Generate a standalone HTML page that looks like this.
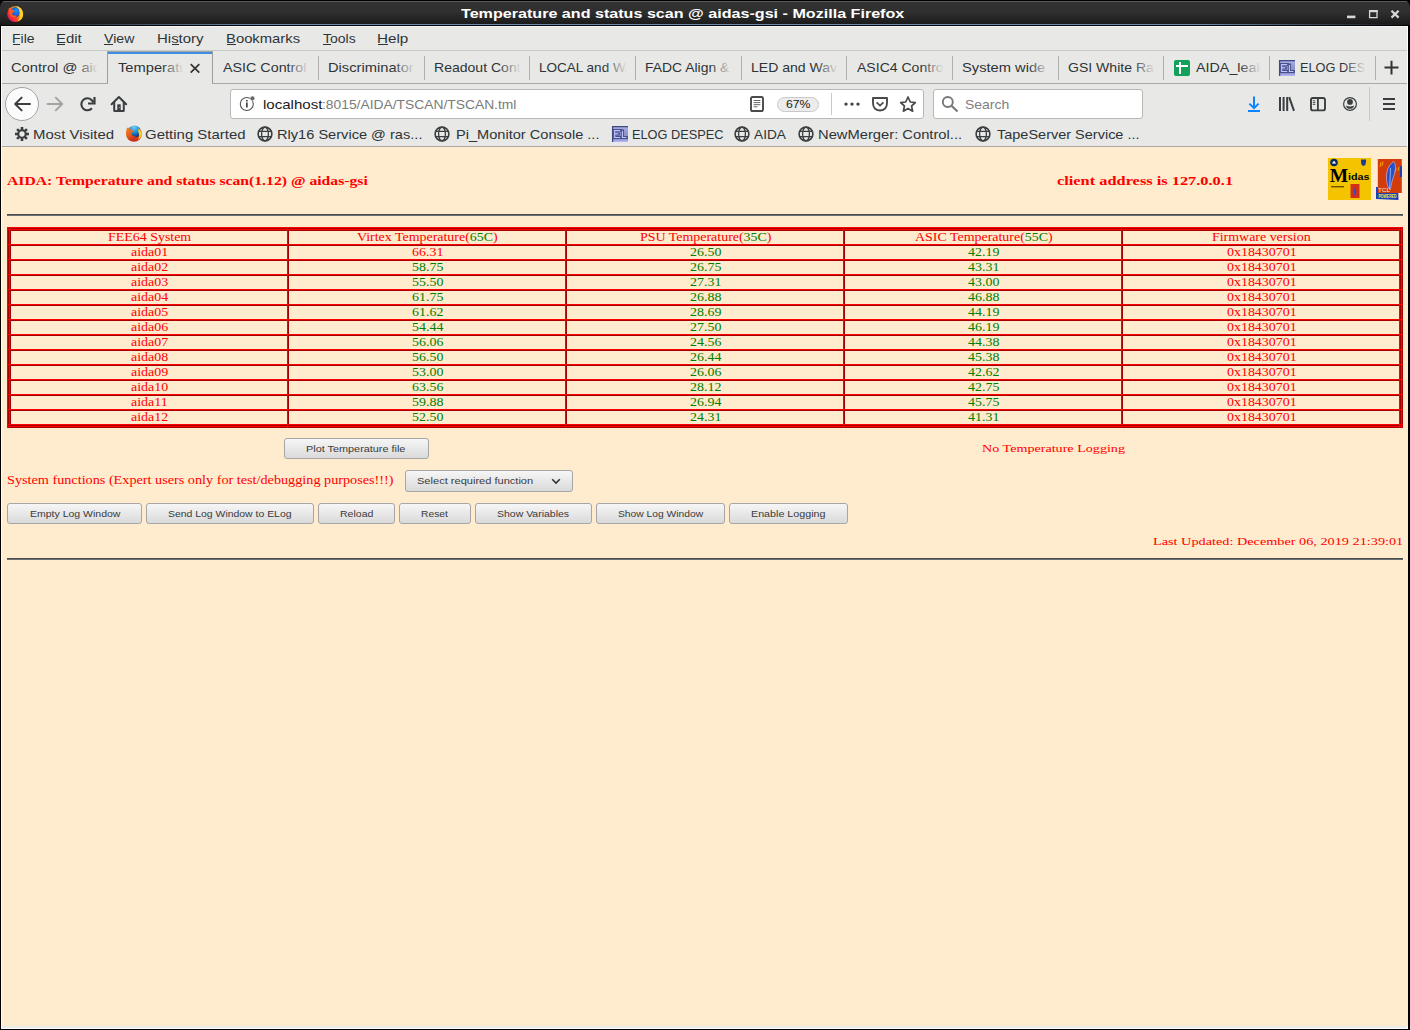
<!DOCTYPE html>
<html><head><meta charset="utf-8">
<style>
*{margin:0;padding:0;box-sizing:border-box}
html,body{width:1410px;height:1030px;overflow:hidden;background:#000}
body{position:relative;font-family:"Liberation Sans",sans-serif}
.a{position:absolute}
.t{position:absolute;white-space:nowrap;transform-origin:0 0;line-height:1}
.btn{position:absolute;border:1px solid #a6a6a6;border-radius:3px;background:linear-gradient(#f6f6f6,#dadada)}
svg{position:absolute;overflow:visible}
</style></head><body>

<div class="a" style="left:0;top:0;width:1410px;height:26px;background:linear-gradient(#000 0,#000 1px,#585858 1px,#585858 2px,#323232 2px,#2f2f2f 12px,#1d1d1d 23px,#1a1a1a 24px);border-radius:7px 7px 0 0"></div>
<div class="a" style="left:2px;top:24px;width:1406px;height:1px;background:linear-gradient(to right,rgba(106,138,176,0) 10px,#6a8ab0 260px,#6a8ab0 1200px,rgba(106,138,176,0) 1400px)"></div>
<div class="a" style="left:0;top:25px;width:1410px;height:1px;background:#050505"></div>
<div class="a" style="left:1px;top:26px;width:1407px;height:1003px;background:#fdfdfd"></div>
<div class="a" style="left:2px;top:26px;width:1405px;height:121px;background:#e8e8e7"></div>
<div class="a" style="left:2px;top:26px;width:1405px;height:1px;background:#f6f6f5"></div>
<div class="a" style="left:2px;top:50px;width:1405px;height:1px;background:#c9c9c7"></div>
<div class="a" style="left:2px;top:83px;width:1405px;height:1px;background:#a9a9a7"></div>
<div class="a" style="left:2px;top:146px;width:1405px;height:1px;background:#a9a9a7"></div>
<div class="a" style="left:2px;top:147px;width:1406px;height:879px;background:#ffebcd"></div>
<div class="a" style="left:2px;top:1026px;width:1405px;height:2px;background:#ececec"></div>
<div class="a" style="left:7px;top:214px;width:1396px;height:1px;background:#4b4d50"></div>
<div class="a" style="left:7px;top:215px;width:1396px;height:1px;background:#6c6f72"></div>
<div class="a" style="left:7px;top:558px;width:1396px;height:1px;background:#4b4d50"></div>
<div class="a" style="left:7px;top:559px;width:1396px;height:1px;background:#6c6f72"></div>
<svg style="left:7px;top:227px" width="1396" height="201" shape-rendering="crispEdges"><rect x="0" y="0" width="1396" height="201" fill="#a80000"/><rect x="0" y="0" width="1396" height="1" fill="#ff0000"/><rect x="0" y="2" width="1396" height="1" fill="#ff0000"/><rect x="0" y="17" width="1396" height="1" fill="#ff0000"/><rect x="0" y="32" width="1396" height="1" fill="#ff0000"/><rect x="0" y="47" width="1396" height="1" fill="#ff0000"/><rect x="0" y="62" width="1396" height="1" fill="#ff0000"/><rect x="0" y="77" width="1396" height="1" fill="#ff0000"/><rect x="0" y="92" width="1396" height="1" fill="#ff0000"/><rect x="0" y="107" width="1396" height="1" fill="#ff0000"/><rect x="0" y="122" width="1396" height="1" fill="#ff0000"/><rect x="0" y="137" width="1396" height="1" fill="#ff0000"/><rect x="0" y="152" width="1396" height="1" fill="#ff0000"/><rect x="0" y="167" width="1396" height="1" fill="#ff0000"/><rect x="0" y="182" width="1396" height="1" fill="#ff0000"/><rect x="0" y="197" width="1396" height="1" fill="#ff0000"/><rect x="0" y="199" width="1396" height="1" fill="#ff0000"/><rect x="0" y="0" width="1" height="201" fill="#ff0000"/><rect x="2" y="0" width="1" height="201" fill="#ff0000"/><rect x="280" y="0" width="1" height="201" fill="#ff0000"/><rect x="558" y="0" width="1" height="201" fill="#ff0000"/><rect x="836" y="0" width="1" height="201" fill="#ff0000"/><rect x="1114" y="0" width="1" height="201" fill="#ff0000"/><rect x="1392" y="0" width="1" height="201" fill="#ff0000"/><rect x="1394" y="0" width="1" height="201" fill="#ff0000"/><rect x="4" y="4" width="276" height="13" fill="#ffebcd"/><rect x="4" y="19" width="276" height="13" fill="#ffebcd"/><rect x="4" y="34" width="276" height="13" fill="#ffebcd"/><rect x="4" y="49" width="276" height="13" fill="#ffebcd"/><rect x="4" y="64" width="276" height="13" fill="#ffebcd"/><rect x="4" y="79" width="276" height="13" fill="#ffebcd"/><rect x="4" y="94" width="276" height="13" fill="#ffebcd"/><rect x="4" y="109" width="276" height="13" fill="#ffebcd"/><rect x="4" y="124" width="276" height="13" fill="#ffebcd"/><rect x="4" y="139" width="276" height="13" fill="#ffebcd"/><rect x="4" y="154" width="276" height="13" fill="#ffebcd"/><rect x="4" y="169" width="276" height="13" fill="#ffebcd"/><rect x="4" y="184" width="276" height="13" fill="#ffebcd"/><rect x="282" y="4" width="276" height="13" fill="#ffebcd"/><rect x="282" y="19" width="276" height="13" fill="#ffebcd"/><rect x="282" y="34" width="276" height="13" fill="#ffebcd"/><rect x="282" y="49" width="276" height="13" fill="#ffebcd"/><rect x="282" y="64" width="276" height="13" fill="#ffebcd"/><rect x="282" y="79" width="276" height="13" fill="#ffebcd"/><rect x="282" y="94" width="276" height="13" fill="#ffebcd"/><rect x="282" y="109" width="276" height="13" fill="#ffebcd"/><rect x="282" y="124" width="276" height="13" fill="#ffebcd"/><rect x="282" y="139" width="276" height="13" fill="#ffebcd"/><rect x="282" y="154" width="276" height="13" fill="#ffebcd"/><rect x="282" y="169" width="276" height="13" fill="#ffebcd"/><rect x="282" y="184" width="276" height="13" fill="#ffebcd"/><rect x="560" y="4" width="276" height="13" fill="#ffebcd"/><rect x="560" y="19" width="276" height="13" fill="#ffebcd"/><rect x="560" y="34" width="276" height="13" fill="#ffebcd"/><rect x="560" y="49" width="276" height="13" fill="#ffebcd"/><rect x="560" y="64" width="276" height="13" fill="#ffebcd"/><rect x="560" y="79" width="276" height="13" fill="#ffebcd"/><rect x="560" y="94" width="276" height="13" fill="#ffebcd"/><rect x="560" y="109" width="276" height="13" fill="#ffebcd"/><rect x="560" y="124" width="276" height="13" fill="#ffebcd"/><rect x="560" y="139" width="276" height="13" fill="#ffebcd"/><rect x="560" y="154" width="276" height="13" fill="#ffebcd"/><rect x="560" y="169" width="276" height="13" fill="#ffebcd"/><rect x="560" y="184" width="276" height="13" fill="#ffebcd"/><rect x="838" y="4" width="276" height="13" fill="#ffebcd"/><rect x="838" y="19" width="276" height="13" fill="#ffebcd"/><rect x="838" y="34" width="276" height="13" fill="#ffebcd"/><rect x="838" y="49" width="276" height="13" fill="#ffebcd"/><rect x="838" y="64" width="276" height="13" fill="#ffebcd"/><rect x="838" y="79" width="276" height="13" fill="#ffebcd"/><rect x="838" y="94" width="276" height="13" fill="#ffebcd"/><rect x="838" y="109" width="276" height="13" fill="#ffebcd"/><rect x="838" y="124" width="276" height="13" fill="#ffebcd"/><rect x="838" y="139" width="276" height="13" fill="#ffebcd"/><rect x="838" y="154" width="276" height="13" fill="#ffebcd"/><rect x="838" y="169" width="276" height="13" fill="#ffebcd"/><rect x="838" y="184" width="276" height="13" fill="#ffebcd"/><rect x="1116" y="4" width="276" height="13" fill="#ffebcd"/><rect x="1116" y="19" width="276" height="13" fill="#ffebcd"/><rect x="1116" y="34" width="276" height="13" fill="#ffebcd"/><rect x="1116" y="49" width="276" height="13" fill="#ffebcd"/><rect x="1116" y="64" width="276" height="13" fill="#ffebcd"/><rect x="1116" y="79" width="276" height="13" fill="#ffebcd"/><rect x="1116" y="94" width="276" height="13" fill="#ffebcd"/><rect x="1116" y="109" width="276" height="13" fill="#ffebcd"/><rect x="1116" y="124" width="276" height="13" fill="#ffebcd"/><rect x="1116" y="139" width="276" height="13" fill="#ffebcd"/><rect x="1116" y="154" width="276" height="13" fill="#ffebcd"/><rect x="1116" y="169" width="276" height="13" fill="#ffebcd"/><rect x="1116" y="184" width="276" height="13" fill="#ffebcd"/></svg>
<div class="btn" style="left:284px;top:438px;width:145px;height:21px"></div>
<div class="btn" style="left:405px;top:470px;width:168px;height:22px"></div>
<div class="btn" style="left:7px;top:503px;width:135px;height:21px"></div>
<div class="btn" style="left:146px;top:503px;width:168px;height:21px"></div>
<div class="btn" style="left:318px;top:503px;width:77px;height:21px"></div>
<div class="btn" style="left:399px;top:503px;width:72px;height:21px"></div>
<div class="btn" style="left:475px;top:503px;width:117px;height:21px"></div>
<div class="btn" style="left:596px;top:503px;width:129px;height:21px"></div>
<div class="btn" style="left:729px;top:503px;width:119px;height:21px"></div>
<svg style="left:551px;top:478px" width="10" height="7"><path d="M1.2 1.2 L5 5 L8.8 1.2" fill="none" stroke="#333" stroke-width="1.6"/></svg>
<svg style="left:7px;top:6px" width="18" height="18" viewBox="7 6 18 18" ><defs><linearGradient id="ffa" x1="0" y1="0.9" x2="1" y2="0.1"><stop offset="0" stop-color="#c8107f"/><stop offset=".3" stop-color="#ff2d3a"/><stop offset=".62" stop-color="#ff8a00"/><stop offset=".85" stop-color="#ffd42a"/></linearGradient><radialGradient id="ffb" cx=".6" cy=".35" r=".7"><stop offset="0" stop-color="#0a9cff"/><stop offset=".7" stop-color="#1f4fd6"/><stop offset="1" stop-color="#2a2a8f"/></radialGradient></defs><circle cx="15.2" cy="14.2" r="7.9" fill="url(#ffa)"/><ellipse cx="15.3" cy="12.3" rx="4.4" ry="5.4" fill="url(#ffb)"/><path d="M16.3 5.8 Q22.6 7.8 23.1 14 Q23 19.6 17.6 21.6 Q20.6 17.6 19.8 12.6 Q19 8.2 16.3 5.8Z" fill="#ffcf2a"/><path d="M8.6 8.6 L10.4 7.6 L11.6 9.6 Q13.6 9.8 14.8 11.6 L13.2 12.2 Q11.9 13 12.4 14.8 Q13.8 16 16.2 15.2 Q17.4 16.8 14.8 17.8 Q10.6 17.8 9.4 14Z" fill="#ff5a1a"/></svg>
<svg style="left:1344px;top:8px" width="60" height="14" viewBox="1344 8 60 14" ><rect x="1347" y="15.6" width="8.4" height="2.6" fill="#d8d8d8"/><path d="M1369.6 10.6 H1377 V17.6 H1369.6Z" fill="none" stroke="#d8d8d8" stroke-width="1.3"/><rect x="1369" y="10" width="8.6" height="2.2" fill="#d8d8d8"/><path d="M1391.5 10.8 L1398.6 17.6 M1398.6 10.8 L1391.5 17.6" stroke="#d8d8d8" stroke-width="2.2"/></svg>
<div class="a" style="left:13px;top:44px;width:7px;height:1px;background:#2e3436"></div>
<div class="a" style="left:57px;top:44px;width:8px;height:1px;background:#2e3436"></div>
<div class="a" style="left:104px;top:44px;width:9px;height:1px;background:#2e3436"></div>
<div class="a" style="left:172px;top:44px;width:7px;height:1px;background:#2e3436"></div>
<div class="a" style="left:227px;top:44px;width:9px;height:1px;background:#2e3436"></div>
<div class="a" style="left:323px;top:44px;width:8px;height:1px;background:#2e3436"></div>
<div class="a" style="left:378px;top:44px;width:10px;height:1px;background:#2e3436"></div>
<div class="a" style="left:318px;top:56px;width:1px;height:24px;background:#b0b0ae"></div>
<div class="a" style="left:424px;top:56px;width:1px;height:24px;background:#b0b0ae"></div>
<div class="a" style="left:529px;top:56px;width:1px;height:24px;background:#b0b0ae"></div>
<div class="a" style="left:635px;top:56px;width:1px;height:24px;background:#b0b0ae"></div>
<div class="a" style="left:741px;top:56px;width:1px;height:24px;background:#b0b0ae"></div>
<div class="a" style="left:846px;top:56px;width:1px;height:24px;background:#b0b0ae"></div>
<div class="a" style="left:952px;top:56px;width:1px;height:24px;background:#b0b0ae"></div>
<div class="a" style="left:1058px;top:56px;width:1px;height:24px;background:#b0b0ae"></div>
<div class="a" style="left:1163px;top:56px;width:1px;height:24px;background:#b0b0ae"></div>
<div class="a" style="left:1269px;top:56px;width:1px;height:24px;background:#b0b0ae"></div>
<div class="a" style="left:1375px;top:56px;width:1px;height:24px;background:#b0b0ae"></div>
<div class="a" style="left:107px;top:51px;width:106px;height:33px;background:#e8e8e7;border-left:1px solid #9d9d9b;border-right:1px solid #9d9d9b;border-top:1px solid #a6a6a4"></div>
<div class="a" style="left:108px;top:52px;width:104px;height:2px;background:#3b8ee0"></div>
<svg style="left:188px;top:62px" width="13" height="13" viewBox="188 62 13 13" ><path d="M190.7 64.2 L199.3 72.6 M199.3 64.2 L190.7 72.6" stroke="#333" stroke-width="1.7"/></svg>
<svg style="left:1174px;top:60px" width="16" height="16" viewBox="1174 60 16 16" ><rect x="1174" y="60" width="16" height="16" rx="2" fill="#12a05a"/><rect x="1176" y="65" width="12" height="2" fill="#fff"/><rect x="1179" y="62" width="2" height="12" fill="#fff"/></svg>
<svg style="left:1279px;top:60px" width="16" height="16" viewBox="1279 60 16 16" ><defs><linearGradient id="eg1279" x1="0" y1="0" x2="0" y2="1"><stop offset="0" stop-color="#aeb0ec"/><stop offset=".45" stop-color="#9096c8"/><stop offset=".8" stop-color="#8a90c4"/><stop offset="1" stop-color="#b8baff"/></linearGradient></defs><rect x="1279" y="60" width="16" height="16" fill="url(#eg1279)"/><path d="M1279.6 76 V60.6 H1295" stroke="#3f4a80" stroke-width="1.3" fill="none"/><path d="M1287.2 64.6 H1281.7 V71.5 H1287.2 M1281.7 67.9 H1285.3 M1289.4 65 V71.5 H1293.4" stroke="#45508a" stroke-width="3" fill="none" stroke-linecap="square"/><path d="M1287.2 64.6 H1281.7 V71.5 H1287.2 M1281.7 67.9 H1285.3 M1289.4 65 V71.5 H1293.4" stroke="#c4c4ff" stroke-width="1.15" fill="none"/></svg>
<svg style="left:1383px;top:60px" width="17" height="15" viewBox="1383 60 17 15" ><path d="M1384.5 67.6 H1398.5 M1391.5 60.8 V74.4" stroke="#333" stroke-width="2"/></svg>
<svg style="left:4px;top:86px" width="37" height="37" viewBox="4 86 37 37" ><circle cx="22" cy="104" r="16.5" fill="#fbfbfb" stroke="#a3a3a3" stroke-width="1"/><path d="M15.4 104 H30 M21.6 97.6 L15.2 104 L21.6 110.4" fill="none" stroke="#3b3e41" stroke-width="2" stroke-linejoin="round" stroke-linecap="round"/></svg>
<svg style="left:45px;top:95px" width="20" height="18" viewBox="45 95 20 18" ><path d="M47.5 104 H62 M55.8 97.6 L62.2 104 L55.8 110.4" fill="none" stroke="#a4a4a4" stroke-width="2" stroke-linejoin="round" stroke-linecap="round"/></svg>
<svg style="left:78px;top:95px" width="20" height="18" viewBox="78 95 20 18" ><path d="M91.9 108.2 A6 6 0 1 1 91.6 100 L93.6 102.4" fill="none" stroke="#3b3e41" stroke-width="2.1"/><path d="M88 103.5 H94.5 V97" fill="none" stroke="#3b3e41" stroke-width="2.2"/></svg>
<svg style="left:109px;top:94px" width="20" height="20" viewBox="109 94 20 20" ><path d="M111.6 104.2 L118.9 97 L126.2 104.2" fill="none" stroke="#3b3e41" stroke-width="2" stroke-linejoin="round" stroke-linecap="round"/><path d="M114.2 102 V110.4 Q114.2 111 114.8 111 H123.2 Q123.8 111 123.8 110.4 V102" fill="none" stroke="#3b3e41" stroke-width="2"/><rect x="117.3" y="104.3" width="3.4" height="6.8" fill="#3b3e41"/><circle cx="119.3" cy="107.5" r=".5" fill="#ccc"/></svg>
<div class="a" style="left:230px;top:89px;width:694px;height:30px;background:#fff;border:1px solid #b7b7b5;border-radius:3px"></div>
<svg style="left:238px;top:95px" width="18" height="18" viewBox="238 95 18 18" ><circle cx="246.8" cy="104" r="6.5" fill="none" stroke="#555" stroke-width="1.1"/><rect x="246" y="102.5" width="1.7" height="5" fill="#444"/><rect x="246" y="100" width="1.7" height="1.5" fill="#444"/><circle cx="252.4" cy="98.4" r="2.4" fill="#666" stroke="#fff" stroke-width=".6"/></svg>
<svg style="left:748px;top:94px" width="18" height="20" viewBox="748 94 18 20" ><rect x="751" y="97" width="12" height="14" rx="1.6" fill="none" stroke="#4a4a4a" stroke-width="1.9"/><path d="M753.6 100.5 H760.4 M753.6 102.6 H760.4 M753.6 104.7 H760.4 M753.6 106.8 H757.5" stroke="#555" stroke-width=".9"/></svg>
<div class="a" style="left:777px;top:97px;width:42px;height:15px;background:#ececec;border:1px solid #c9c9c9;border-radius:8px"></div>
<div class="a" style="left:831px;top:93px;width:1px;height:22px;background:#c8c8c8"></div>
<svg style="left:842px;top:100px" width="20" height="8" viewBox="842 100 20 8" ><circle cx="846" cy="104.1" r="1.7" fill="#444"/><circle cx="852" cy="104.1" r="1.7" fill="#444"/><circle cx="858" cy="104.1" r="1.7" fill="#444"/></svg>
<svg style="left:870px;top:95px" width="20" height="18" viewBox="870 95 20 18" ><path d="M873 98 H887 V103 Q887 110 880 110.5 Q873 110 873 103Z" fill="none" stroke="#4a4a4a" stroke-width="1.9" stroke-linejoin="round"/><path d="M876.6 102.4 L880 105.6 L883.4 102.4" fill="none" stroke="#4a4a4a" stroke-width="1.7"/></svg>
<svg style="left:898px;top:94px" width="20" height="20" viewBox="898 94 20 20" ><path d="M908 97 L910.3 102 L915.3 102.6 L911.6 106 L912.6 111.2 L908 108.6 L903.4 111.2 L904.4 106 L900.7 102.6 L905.7 102Z" fill="none" stroke="#4a4a4a" stroke-width="1.7" stroke-linejoin="round"/></svg>
<div class="a" style="left:933px;top:89px;width:210px;height:30px;background:#fff;border:1px solid #b7b7b5;border-radius:3px"></div>
<svg style="left:940px;top:94px" width="20" height="20" viewBox="940 94 20 20" ><circle cx="947.8" cy="102" r="5" fill="none" stroke="#777" stroke-width="1.9"/><path d="M951.5 105.8 L957.5 111.6" stroke="#777" stroke-width="2.1"/></svg>
<svg style="left:1246px;top:94px" width="16" height="20" viewBox="1246 94 16 20" ><path d="M1254 96.5 V108 M1249.4 103.6 L1254 108.2 L1258.6 103.6" fill="none" stroke="#0a84ff" stroke-width="2"/><rect x="1248" y="110" width="12" height="2" fill="#0a84ff"/></svg>
<svg style="left:1277px;top:95px" width="20" height="18" viewBox="1277 95 20 18" ><rect x="1279" y="97" width="2" height="14" fill="#3b3e41"/><rect x="1282.6" y="97" width="2" height="14" fill="#3b3e41"/><rect x="1286.2" y="97" width="2" height="14" fill="#3b3e41"/><path d="M1289.2 97.2 L1294 110.8" stroke="#3b3e41" stroke-width="2"/></svg>
<svg style="left:1308px;top:95px" width="20" height="18" viewBox="1308 95 20 18" ><rect x="1311" y="98" width="14" height="12.4" rx="2" fill="none" stroke="#3b3e41" stroke-width="1.9"/><rect x="1317" y="98" width="1.8" height="12.4" fill="#3b3e41"/><path d="M1312.8 100.8 H1315.3 M1312.8 102.6 H1315.3 M1312.8 104.4 H1315.3" stroke="#3b3e41" stroke-width=".9"/></svg>
<svg style="left:1341px;top:95px" width="18" height="18" viewBox="1341 95 18 18" ><circle cx="1350" cy="104" r="6.4" fill="none" stroke="#3b3e41" stroke-width="1.2"/><circle cx="1350" cy="101.9" r="2.9" fill="#3b3e41"/><path d="M1346 105.4 Q1350 107.6 1354 105.4 Q1353.6 108.8 1350 108.8 Q1346.4 108.8 1346 105.4Z" fill="#3b3e41"/></svg>
<div class="a" style="left:1369px;top:87px;width:1px;height:34px;background:#c8c8c6"></div>
<svg style="left:1381px;top:96px" width="16" height="16" viewBox="1381 96 16 16" ><rect x="1383" y="98" width="12" height="2" fill="#3b3e41"/><rect x="1383" y="103" width="12" height="2" fill="#3b3e41"/><rect x="1383" y="108" width="12" height="2" fill="#3b3e41"/></svg>
<svg style="left:13px;top:125px" width="18" height="18" viewBox="13 125 18 18" ><circle cx="22" cy="134" r="3.7" fill="none" stroke="#3b3e41" stroke-width="2.1"/><rect x="20.7" y="127" width="2.6" height="3.4" fill="#3b3e41" transform="rotate(0 22 134)"/><rect x="20.7" y="127" width="2.6" height="3.4" fill="#3b3e41" transform="rotate(45 22 134)"/><rect x="20.7" y="127" width="2.6" height="3.4" fill="#3b3e41" transform="rotate(90 22 134)"/><rect x="20.7" y="127" width="2.6" height="3.4" fill="#3b3e41" transform="rotate(135 22 134)"/><rect x="20.7" y="127" width="2.6" height="3.4" fill="#3b3e41" transform="rotate(180 22 134)"/><rect x="20.7" y="127" width="2.6" height="3.4" fill="#3b3e41" transform="rotate(225 22 134)"/><rect x="20.7" y="127" width="2.6" height="3.4" fill="#3b3e41" transform="rotate(270 22 134)"/><rect x="20.7" y="127" width="2.6" height="3.4" fill="#3b3e41" transform="rotate(315 22 134)"/></svg>
<svg style="left:126px;top:126px" width="16" height="16" viewBox="126 126 16 16" ><defs><radialGradient id="fob" cx=".45" cy=".15" r=".9"><stop offset="0" stop-color="#6ad0f8"/><stop offset=".5" stop-color="#1b8fd6"/><stop offset="1" stop-color="#0a1f66"/></radialGradient><linearGradient id="foo" x1="0" y1="0" x2=".3" y2="1"><stop offset="0" stop-color="#f08020"/><stop offset=".6" stop-color="#e8601e"/><stop offset="1" stop-color="#c8301a"/></linearGradient></defs><circle cx="134" cy="133.8" r="7.9" fill="url(#foo)"/><circle cx="134.6" cy="131.4" r="6" fill="url(#fob)"/><path d="M138.2 128.6 Q142.6 131.5 141.6 135.6 Q140.6 139 137.6 140 Q140.2 136.6 138.8 133.6 Q138.2 131 138.2 128.6Z" fill="#ffd21f"/><path d="M126.8 128 L128.2 127.4 L129 129.8 Q130.6 128.8 131.8 129.6 L133.4 131.2 L132.2 132.6 Q131.2 133 131.6 134.4 Q133 136.4 135.8 135.8 L135.2 137 Q133.2 137.8 133.8 139.2 L136.6 139.6 Q133.2 141.8 129.6 140.2 Q126 138 126.2 133Z" fill="url(#foo)"/></svg>
<svg style="left:257px;top:126px" width="16" height="16" viewBox="257 126 16 16" ><g fill="none" stroke="#3b3e41"><circle cx="265" cy="134" r="6.9" stroke-width="1.6"/><ellipse cx="265" cy="134" rx="3.4" ry="6.9" stroke-width="1.3"/><path d="M258.4 131.4 H271.6 M258.4 136.6 H271.6" stroke-width="1.3"/></g></svg>
<svg style="left:434px;top:126px" width="16" height="16" viewBox="434 126 16 16" ><g fill="none" stroke="#3b3e41"><circle cx="442" cy="134" r="6.9" stroke-width="1.6"/><ellipse cx="442" cy="134" rx="3.4" ry="6.9" stroke-width="1.3"/><path d="M435.4 131.4 H448.6 M435.4 136.6 H448.6" stroke-width="1.3"/></g></svg>
<svg style="left:734px;top:126px" width="16" height="16" viewBox="734 126 16 16" ><g fill="none" stroke="#3b3e41"><circle cx="742" cy="134" r="6.9" stroke-width="1.6"/><ellipse cx="742" cy="134" rx="3.4" ry="6.9" stroke-width="1.3"/><path d="M735.4 131.4 H748.6 M735.4 136.6 H748.6" stroke-width="1.3"/></g></svg>
<svg style="left:798px;top:126px" width="16" height="16" viewBox="798 126 16 16" ><g fill="none" stroke="#3b3e41"><circle cx="806" cy="134" r="6.9" stroke-width="1.6"/><ellipse cx="806" cy="134" rx="3.4" ry="6.9" stroke-width="1.3"/><path d="M799.4 131.4 H812.6 M799.4 136.6 H812.6" stroke-width="1.3"/></g></svg>
<svg style="left:975px;top:126px" width="16" height="16" viewBox="975 126 16 16" ><g fill="none" stroke="#3b3e41"><circle cx="983" cy="134" r="6.9" stroke-width="1.6"/><ellipse cx="983" cy="134" rx="3.4" ry="6.9" stroke-width="1.3"/><path d="M976.4 131.4 H989.6 M976.4 136.6 H989.6" stroke-width="1.3"/></g></svg>
<svg style="left:612px;top:126px" width="16" height="16" viewBox="612 126 16 16" ><defs><linearGradient id="eg612" x1="0" y1="0" x2="0" y2="1"><stop offset="0" stop-color="#aeb0ec"/><stop offset=".45" stop-color="#9096c8"/><stop offset=".8" stop-color="#8a90c4"/><stop offset="1" stop-color="#b8baff"/></linearGradient></defs><rect x="612" y="126" width="16" height="16" fill="url(#eg612)"/><path d="M612.6 142 V126.6 H628" stroke="#3f4a80" stroke-width="1.3" fill="none"/><path d="M620.2 130.6 H614.7 V137.5 H620.2 M614.7 133.9 H618.3 M622.4 131 V137.5 H626.4" stroke="#45508a" stroke-width="3" fill="none" stroke-linecap="square"/><path d="M620.2 130.6 H614.7 V137.5 H620.2 M614.7 133.9 H618.3 M622.4 131 V137.5 H626.4" stroke="#c4c4ff" stroke-width="1.15" fill="none"/></svg>
<svg style="left:1328px;top:158px" width="43" height="42" viewBox="1328 158 43 42" ><rect x="1328" y="158" width="43" height="42" fill="#f5c400"/><circle cx="1334" cy="162.5" r="3.8" fill="#0c2a62"/><path d="M1331.8 163.6 L1334 160.8 L1336.2 163.6Z" fill="#fff"/><path d="M1361 159.5 H1366 V162 Q1366 165 1363.5 166 Q1361 165 1361 162Z" fill="#1f3a9a"/><text x="1329.8" y="181.6" font-family="Liberation Serif" font-weight="bold" font-size="19" textLength="18.4" lengthAdjust="spacingAndGlyphs" fill="#000">M</text><text x="1348" y="180.2" font-family="Liberation Sans" font-weight="bold" font-size="9.2" textLength="21.5" lengthAdjust="spacingAndGlyphs" fill="#000">idas</text><rect x="1331" y="186" width="13" height="1.4" fill="#4a3a00" opacity=".8"/><rect x="1350.5" y="184" width="9" height="14" fill="#d3301a"/><path d="M1355.8 186 Q1353 190 1354.5 196 Q1357 191 1355.8 186Z" fill="#2a4fb8"/></svg>
<svg style="left:1376px;top:158px" width="28" height="43" viewBox="1376 158 28 43" ><path d="M1376 187 L1398 187.5 L1398.5 200 L1376 199Z" fill="#1d3fb8"/><rect x="1377.8" y="159" width="24" height="34" fill="#d23c0a"/><rect x="1400" y="166" width="2" height="11" fill="#1d3fb8"/><path d="M1393.5 161.5 Q1385.5 167 1386.5 180 Q1387.5 188 1390 190 Q1392 180 1395 172 Q1396.5 165 1393.5 161.5Z" fill="#2550c8" stroke="#e8d8ff" stroke-width=".5"/><path d="M1390.5 168 L1389.6 189" stroke="#c8d4ff" stroke-width=".7"/><path d="M1381 162 L1380 167 M1383 161.5 L1382 166" stroke="#f7a600" stroke-width=".9"/><path d="M1396 168 L1395 172 M1399 167 L1398 171" stroke="#f7a600" stroke-width=".9"/><text x="1378" y="191.5" font-family="Liberation Sans" font-size="6" textLength="12" lengthAdjust="spacingAndGlyphs" fill="#f4e0d8">TCL</text><text x="1378.5" y="198" font-family="Liberation Sans" font-weight="bold" font-size="5" textLength="18" lengthAdjust="spacingAndGlyphs" fill="#e8ef3a">POWERED</text></svg>
<div class="t" style="left:460.60px;top:6.00px;font:bold 13.5px 'Liberation Sans';color:#ffffff;transform:scaleX(1.1932);">Temperature and status scan @ aidas-gsi - Mozilla Firefox</div>
<div class="t" style="left:12.31px;top:31.00px;font:normal 13px 'Liberation Sans';color:#2e3436;transform:scaleX(1.0771);">File</div>
<div class="t" style="left:56.13px;top:31.00px;font:normal 13px 'Liberation Sans';color:#2e3436;transform:scaleX(1.1479);">Edit</div>
<div class="t" style="left:104.30px;top:31.00px;font:normal 13px 'Liberation Sans';color:#2e3436;transform:scaleX(1.0854);">View</div>
<div class="t" style="left:157.43px;top:31.00px;font:normal 13px 'Liberation Sans';color:#2e3436;transform:scaleX(1.1514);">History</div>
<div class="t" style="left:226.44px;top:31.00px;font:normal 13px 'Liberation Sans';color:#2e3436;transform:scaleX(1.1400);">Bookmarks</div>
<div class="t" style="left:322.98px;top:31.00px;font:normal 13px 'Liberation Sans';color:#2e3436;transform:scaleX(1.0760);">Tools</div>
<div class="t" style="left:377.11px;top:31.00px;font:normal 13px 'Liberation Sans';color:#2e3436;transform:scaleX(1.1709);">Help</div>
<div class="t" style="left:33.13px;top:127.00px;font:normal 13px 'Liberation Sans';color:#2e3436;transform:scaleX(1.1479);">Most Visited</div>
<div class="t" style="left:145.30px;top:127.00px;font:normal 13px 'Liberation Sans';color:#2e3436;transform:scaleX(1.1498);">Getting Started</div>
<div class="t" style="left:276.86px;top:127.00px;font:normal 13px 'Liberation Sans';color:#2e3436;transform:scaleX(1.1231);">Rly16 Service @ ras...</div>
<div class="t" style="left:455.86px;top:127.00px;font:normal 13px 'Liberation Sans';color:#2e3436;transform:scaleX(1.1217);">Pi_Monitor Console ...</div>
<div class="t" style="left:631.50px;top:127.00px;font:normal 13px 'Liberation Sans';color:#2e3436;transform:scaleX(0.9811);">ELOG DESPEC</div>
<div class="t" style="left:754.00px;top:127.00px;font:normal 13px 'Liberation Sans';color:#2e3436;transform:scaleX(1.0524);">AIDA</div>
<div class="t" style="left:817.85px;top:127.00px;font:normal 13px 'Liberation Sans';color:#2e3436;transform:scaleX(1.1332);">NewMerger: Control...</div>
<div class="t" style="left:996.77px;top:127.00px;font:normal 13px 'Liberation Sans';color:#2e3436;transform:scaleX(1.1145);">TapeServer Service ...</div>
<div class="t" style="left:262.76px;top:97.00px;font:normal 13px 'Liberation Sans';color:#1a1a1a;transform:scaleX(1.1575);">localhost</div>
<div class="t" style="left:321.72px;top:97.00px;font:normal 13px 'Liberation Sans';color:#7b7b7b;transform:scaleX(1.0636);">:8015/AIDA/TSCAN/TSCAN.tml</div>
<div class="t" style="left:964.76px;top:97.00px;font:normal 13px 'Liberation Sans';color:#808080;transform:scaleX(1.0736);">Search</div>
<div class="t" style="left:785.90px;top:98.00px;font:normal 11.2px 'Liberation Sans';color:#1a1a1a;transform:scaleX(1.0926);">67%</div>
<div class="t" style="left:7.10px;top:173.00px;font:bold 13.5px 'Liberation Serif';color:#ff0000;transform:scaleX(1.1622);">AIDA: Temperature and status scan(1.12) @ aidas-gsi</div>
<div class="t" style="left:1056.89px;top:173.00px;font:bold 13.5px 'Liberation Serif';color:#ff0000;transform:scaleX(1.2122);">client address is 127.0.0.1</div>
<div class="t" style="left:981.62px;top:442.00px;font:normal 11px 'Liberation Serif';color:#ff0000;transform:scaleX(1.2831);">No Temperature Logging</div>
<div class="t" style="left:7.17px;top:474.00px;font:normal 11.5px 'Liberation Serif';color:#ff0000;transform:scaleX(1.2362);">System functions (Expert users only for test/debugging purposes!!!)</div>
<div class="t" style="left:1152.61px;top:535.00px;font:normal 11px 'Liberation Serif';color:#ff0000;transform:scaleX(1.2961);">Last Updated: December 06, 2019 21:39:01</div>
<div class="t" style="left:305.84px;top:443.00px;font:normal 9.5px 'Liberation Sans';color:#3a3a3a;transform:scaleX(1.1432);">Plot Temperature file</div>
<div class="t" style="left:416.53px;top:475.00px;font:normal 9.5px 'Liberation Sans';color:#3a3a3a;transform:scaleX(1.1637);">Select required function</div>
<div class="t" style="left:29.77px;top:508.00px;font:normal 9.5px 'Liberation Sans';color:#3a3a3a;transform:scaleX(1.1044);">Empty Log Window</div>
<div class="t" style="left:167.56px;top:508.00px;font:normal 9.5px 'Liberation Sans';color:#3a3a3a;transform:scaleX(1.0977);">Send Log Window to ELog</div>
<div class="t" style="left:339.57px;top:508.00px;font:normal 9.5px 'Liberation Sans';color:#3a3a3a;transform:scaleX(1.1087);">Reload</div>
<div class="t" style="left:421.49px;top:508.00px;font:normal 9.5px 'Liberation Sans';color:#3a3a3a;transform:scaleX(1.0821);">Reset</div>
<div class="t" style="left:496.76px;top:508.00px;font:normal 9.5px 'Liberation Sans';color:#3a3a3a;transform:scaleX(1.1037);">Show Variables</div>
<div class="t" style="left:617.87px;top:508.00px;font:normal 9.5px 'Liberation Sans';color:#3a3a3a;transform:scaleX(1.0815);">Show Log Window</div>
<div class="t" style="left:751.45px;top:508.00px;font:normal 9.5px 'Liberation Sans';color:#3a3a3a;transform:scaleX(1.1283);">Enable Logging</div>
<div class="a" style="left:7.70px;top:56px;width:90.30px;height:22px;overflow:hidden"><div class="t" style="left:3.31px;top:4.00px;font:normal 13px 'Liberation Sans';color:#2e3436;transform:scaleX(1.13)">Control @ aidas</div><div class="a" style="right:0;top:0;width:22px;height:22px;background:linear-gradient(to right,rgba(232,232,231,0),#e8e8e7)"></div></div>
<div class="a" style="left:113.80px;top:56px;width:70.20px;height:22px;overflow:hidden"><div class="t" style="left:3.77px;top:4.00px;font:normal 13px 'Liberation Sans';color:#2e3436;transform:scaleX(1.13)">Temperature</div><div class="a" style="right:0;top:0;width:22px;height:22px;background:linear-gradient(to right,rgba(232,232,231,0),#e8e8e7)"></div></div>
<div class="a" style="left:218.50px;top:56px;width:90.50px;height:22px;overflow:hidden"><div class="t" style="left:4.00px;top:4.00px;font:normal 13px 'Liberation Sans';color:#2e3436;transform:scaleX(1.1)">ASIC Control</div><div class="a" style="right:0;top:0;width:22px;height:22px;background:linear-gradient(to right,rgba(232,232,231,0),#e8e8e7)"></div></div>
<div class="a" style="left:324.75px;top:56px;width:90.25px;height:22px;overflow:hidden"><div class="t" style="left:2.85px;top:4.00px;font:normal 13px 'Liberation Sans';color:#2e3436;transform:scaleX(1.13)">Discriminator</div><div class="a" style="right:0;top:0;width:22px;height:22px;background:linear-gradient(to right,rgba(232,232,231,0),#e8e8e7)"></div></div>
<div class="a" style="left:431.00px;top:56px;width:90.00px;height:22px;overflow:hidden"><div class="t" style="left:2.90px;top:4.00px;font:normal 13px 'Liberation Sans';color:#2e3436;transform:scaleX(1.08)">Readout Control</div><div class="a" style="right:0;top:0;width:22px;height:22px;background:linear-gradient(to right,rgba(232,232,231,0),#e8e8e7)"></div></div>
<div class="a" style="left:536.00px;top:56px;width:91.00px;height:22px;overflow:hidden"><div class="t" style="left:2.94px;top:4.00px;font:normal 13px 'Liberation Sans';color:#2e3436;transform:scaleX(1.04)">LOCAL and WAVE</div><div class="a" style="right:0;top:0;width:22px;height:22px;background:linear-gradient(to right,rgba(232,232,231,0),#e8e8e7)"></div></div>
<div class="a" style="left:641.60px;top:56px;width:90.40px;height:22px;overflow:hidden"><div class="t" style="left:2.91px;top:4.00px;font:normal 13px 'Liberation Sans';color:#2e3436;transform:scaleX(1.07)">FADC Align &amp;</div><div class="a" style="right:0;top:0;width:22px;height:22px;background:linear-gradient(to right,rgba(232,232,231,0),#e8e8e7)"></div></div>
<div class="a" style="left:747.90px;top:56px;width:90.10px;height:22px;overflow:hidden"><div class="t" style="left:2.90px;top:4.00px;font:normal 13px 'Liberation Sans';color:#2e3436;transform:scaleX(1.08)">LED and Wave</div><div class="a" style="right:0;top:0;width:22px;height:22px;background:linear-gradient(to right,rgba(232,232,231,0),#e8e8e7)"></div></div>
<div class="a" style="left:852.60px;top:56px;width:91.40px;height:22px;overflow:hidden"><div class="t" style="left:4.00px;top:4.00px;font:normal 13px 'Liberation Sans';color:#2e3436;transform:scaleX(1.08)">ASIC4 Control</div><div class="a" style="right:0;top:0;width:22px;height:22px;background:linear-gradient(to right,rgba(232,232,231,0),#e8e8e7)"></div></div>
<div class="a" style="left:958.80px;top:56px;width:91.20px;height:22px;overflow:hidden"><div class="t" style="left:3.54px;top:4.00px;font:normal 13px 'Liberation Sans';color:#2e3436;transform:scaleX(1.13)">System wide</div><div class="a" style="right:0;top:0;width:22px;height:22px;background:linear-gradient(to right,rgba(232,232,231,0),#e8e8e7)"></div></div>
<div class="a" style="left:1064.40px;top:56px;width:90.60px;height:22px;overflow:hidden"><div class="t" style="left:3.34px;top:4.00px;font:normal 13px 'Liberation Sans';color:#2e3436;transform:scaleX(1.08)">GSI White Rabbit</div><div class="a" style="right:0;top:0;width:22px;height:22px;background:linear-gradient(to right,rgba(232,232,231,0),#e8e8e7)"></div></div>
<div class="a" style="left:1191.90px;top:56px;width:69.10px;height:22px;overflow:hidden"><div class="t" style="left:4.00px;top:4.00px;font:normal 13px 'Liberation Sans';color:#2e3436;transform:scaleX(1.1)">AIDA_leak</div><div class="a" style="right:0;top:0;width:22px;height:22px;background:linear-gradient(to right,rgba(232,232,231,0),#e8e8e7)"></div></div>
<div class="a" style="left:1297.30px;top:56px;width:68.70px;height:22px;overflow:hidden"><div class="t" style="left:3.00px;top:4.00px;font:normal 13px 'Liberation Sans';color:#2e3436;transform:scaleX(0.98)">ELOG DESPEC</div><div class="a" style="right:0;top:0;width:22px;height:22px;background:linear-gradient(to right,rgba(232,232,231,0),#e8e8e7)"></div></div>
<div class="t" style="left:107.80px;top:231.00px;font:normal 11.6px 'Liberation Serif';color:#ff0000;transform:scaleX(1.2015)">FEE64 System</div>
<div class="t" style="left:357.23px;top:231.00px;font:normal 11.6px 'Liberation Serif';color:#ff0000;transform:scaleX(1.2015)">Virtex Temperature(<span style="color:#008000">65C</span>)</div>
<div class="t" style="left:639.71px;top:231.00px;font:normal 11.6px 'Liberation Serif';color:#ff0000;transform:scaleX(1.2015)">PSU Temperature(<span style="color:#008000">35C</span>)</div>
<div class="t" style="left:914.73px;top:231.00px;font:normal 11.6px 'Liberation Serif';color:#ff0000;transform:scaleX(1.2015)">ASIC Temperature(<span style="color:#008000">55C</span>)</div>
<div class="t" style="left:1212.06px;top:231.00px;font:normal 11.6px 'Liberation Serif';color:#ff0000;transform:scaleX(1.2015)">Firmware version</div>
<div class="t" style="left:131.08px;top:246.00px;font:normal 11.6px 'Liberation Serif';color:#ff0000;transform:scaleX(1.2015)">aida01</div>
<div class="t" style="left:411.94px;top:246.00px;font:normal 11.6px 'Liberation Serif';color:#ff0000;transform:scaleX(1.2015)">66.31</div>
<div class="t" style="left:689.76px;top:246.00px;font:normal 11.6px 'Liberation Serif';color:#008000;transform:scaleX(1.2015)">26.50</div>
<div class="t" style="left:967.97px;top:246.00px;font:normal 11.6px 'Liberation Serif';color:#008000;transform:scaleX(1.2015)">42.19</div>
<div class="t" style="left:1226.81px;top:246.00px;font:normal 11.6px 'Liberation Serif';color:#ff0000;transform:scaleX(1.2015)">0x18430701</div>
<div class="t" style="left:131.05px;top:261.00px;font:normal 11.6px 'Liberation Serif';color:#ff0000;transform:scaleX(1.2015)">aida02</div>
<div class="t" style="left:411.70px;top:261.00px;font:normal 11.6px 'Liberation Serif';color:#008000;transform:scaleX(1.2015)">58.75</div>
<div class="t" style="left:689.79px;top:261.00px;font:normal 11.6px 'Liberation Serif';color:#008000;transform:scaleX(1.2015)">26.75</div>
<div class="t" style="left:968.09px;top:261.00px;font:normal 11.6px 'Liberation Serif';color:#008000;transform:scaleX(1.2015)">43.31</div>
<div class="t" style="left:1226.81px;top:261.00px;font:normal 11.6px 'Liberation Serif';color:#ff0000;transform:scaleX(1.2015)">0x18430701</div>
<div class="t" style="left:130.96px;top:276.00px;font:normal 11.6px 'Liberation Serif';color:#ff0000;transform:scaleX(1.2015)">aida03</div>
<div class="t" style="left:411.67px;top:276.00px;font:normal 11.6px 'Liberation Serif';color:#008000;transform:scaleX(1.2015)">55.50</div>
<div class="t" style="left:689.91px;top:276.00px;font:normal 11.6px 'Liberation Serif';color:#008000;transform:scaleX(1.2015)">27.31</div>
<div class="t" style="left:967.94px;top:276.00px;font:normal 11.6px 'Liberation Serif';color:#008000;transform:scaleX(1.2015)">43.00</div>
<div class="t" style="left:1226.81px;top:276.00px;font:normal 11.6px 'Liberation Serif';color:#ff0000;transform:scaleX(1.2015)">0x18430701</div>
<div class="t" style="left:130.78px;top:291.00px;font:normal 11.6px 'Liberation Serif';color:#ff0000;transform:scaleX(1.2015)">aida04</div>
<div class="t" style="left:411.82px;top:291.00px;font:normal 11.6px 'Liberation Serif';color:#008000;transform:scaleX(1.2015)">61.75</div>
<div class="t" style="left:689.76px;top:291.00px;font:normal 11.6px 'Liberation Serif';color:#008000;transform:scaleX(1.2015)">26.88</div>
<div class="t" style="left:967.94px;top:291.00px;font:normal 11.6px 'Liberation Serif';color:#008000;transform:scaleX(1.2015)">46.88</div>
<div class="t" style="left:1226.81px;top:291.00px;font:normal 11.6px 'Liberation Serif';color:#ff0000;transform:scaleX(1.2015)">0x18430701</div>
<div class="t" style="left:130.96px;top:306.00px;font:normal 11.6px 'Liberation Serif';color:#ff0000;transform:scaleX(1.2015)">aida05</div>
<div class="t" style="left:411.91px;top:306.00px;font:normal 11.6px 'Liberation Serif';color:#008000;transform:scaleX(1.2015)">61.62</div>
<div class="t" style="left:689.79px;top:306.00px;font:normal 11.6px 'Liberation Serif';color:#008000;transform:scaleX(1.2015)">28.69</div>
<div class="t" style="left:967.97px;top:306.00px;font:normal 11.6px 'Liberation Serif';color:#008000;transform:scaleX(1.2015)">44.19</div>
<div class="t" style="left:1226.81px;top:306.00px;font:normal 11.6px 'Liberation Serif';color:#ff0000;transform:scaleX(1.2015)">0x18430701</div>
<div class="t" style="left:130.87px;top:321.00px;font:normal 11.6px 'Liberation Serif';color:#ff0000;transform:scaleX(1.2015)">aida06</div>
<div class="t" style="left:411.52px;top:321.00px;font:normal 11.6px 'Liberation Serif';color:#008000;transform:scaleX(1.2015)">54.44</div>
<div class="t" style="left:689.76px;top:321.00px;font:normal 11.6px 'Liberation Serif';color:#008000;transform:scaleX(1.2015)">27.50</div>
<div class="t" style="left:967.97px;top:321.00px;font:normal 11.6px 'Liberation Serif';color:#008000;transform:scaleX(1.2015)">46.19</div>
<div class="t" style="left:1226.81px;top:321.00px;font:normal 11.6px 'Liberation Serif';color:#ff0000;transform:scaleX(1.2015)">0x18430701</div>
<div class="t" style="left:130.87px;top:336.00px;font:normal 11.6px 'Liberation Serif';color:#ff0000;transform:scaleX(1.2015)">aida07</div>
<div class="t" style="left:411.61px;top:336.00px;font:normal 11.6px 'Liberation Serif';color:#008000;transform:scaleX(1.2015)">56.06</div>
<div class="t" style="left:689.70px;top:336.00px;font:normal 11.6px 'Liberation Serif';color:#008000;transform:scaleX(1.2015)">24.56</div>
<div class="t" style="left:967.94px;top:336.00px;font:normal 11.6px 'Liberation Serif';color:#008000;transform:scaleX(1.2015)">44.38</div>
<div class="t" style="left:1226.81px;top:336.00px;font:normal 11.6px 'Liberation Serif';color:#ff0000;transform:scaleX(1.2015)">0x18430701</div>
<div class="t" style="left:130.93px;top:351.00px;font:normal 11.6px 'Liberation Serif';color:#ff0000;transform:scaleX(1.2015)">aida08</div>
<div class="t" style="left:411.67px;top:351.00px;font:normal 11.6px 'Liberation Serif';color:#008000;transform:scaleX(1.2015)">56.50</div>
<div class="t" style="left:689.61px;top:351.00px;font:normal 11.6px 'Liberation Serif';color:#008000;transform:scaleX(1.2015)">26.44</div>
<div class="t" style="left:967.94px;top:351.00px;font:normal 11.6px 'Liberation Serif';color:#008000;transform:scaleX(1.2015)">45.38</div>
<div class="t" style="left:1226.81px;top:351.00px;font:normal 11.6px 'Liberation Serif';color:#ff0000;transform:scaleX(1.2015)">0x18430701</div>
<div class="t" style="left:130.96px;top:366.00px;font:normal 11.6px 'Liberation Serif';color:#ff0000;transform:scaleX(1.2015)">aida09</div>
<div class="t" style="left:411.67px;top:366.00px;font:normal 11.6px 'Liberation Serif';color:#008000;transform:scaleX(1.2015)">53.00</div>
<div class="t" style="left:689.70px;top:366.00px;font:normal 11.6px 'Liberation Serif';color:#008000;transform:scaleX(1.2015)">26.06</div>
<div class="t" style="left:968.06px;top:366.00px;font:normal 11.6px 'Liberation Serif';color:#008000;transform:scaleX(1.2015)">42.62</div>
<div class="t" style="left:1226.81px;top:366.00px;font:normal 11.6px 'Liberation Serif';color:#ff0000;transform:scaleX(1.2015)">0x18430701</div>
<div class="t" style="left:130.93px;top:381.00px;font:normal 11.6px 'Liberation Serif';color:#ff0000;transform:scaleX(1.2015)">aida10</div>
<div class="t" style="left:411.73px;top:381.00px;font:normal 11.6px 'Liberation Serif';color:#008000;transform:scaleX(1.2015)">63.56</div>
<div class="t" style="left:689.88px;top:381.00px;font:normal 11.6px 'Liberation Serif';color:#008000;transform:scaleX(1.2015)">28.12</div>
<div class="t" style="left:967.97px;top:381.00px;font:normal 11.6px 'Liberation Serif';color:#008000;transform:scaleX(1.2015)">42.75</div>
<div class="t" style="left:1226.81px;top:381.00px;font:normal 11.6px 'Liberation Serif';color:#ff0000;transform:scaleX(1.2015)">0x18430701</div>
<div class="t" style="left:131.33px;top:396.00px;font:normal 11.6px 'Liberation Serif';color:#ff0000;transform:scaleX(1.2015)">aida11</div>
<div class="t" style="left:411.67px;top:396.00px;font:normal 11.6px 'Liberation Serif';color:#008000;transform:scaleX(1.2015)">59.88</div>
<div class="t" style="left:689.61px;top:396.00px;font:normal 11.6px 'Liberation Serif';color:#008000;transform:scaleX(1.2015)">26.94</div>
<div class="t" style="left:967.97px;top:396.00px;font:normal 11.6px 'Liberation Serif';color:#008000;transform:scaleX(1.2015)">45.75</div>
<div class="t" style="left:1226.81px;top:396.00px;font:normal 11.6px 'Liberation Serif';color:#ff0000;transform:scaleX(1.2015)">0x18430701</div>
<div class="t" style="left:131.05px;top:411.00px;font:normal 11.6px 'Liberation Serif';color:#ff0000;transform:scaleX(1.2015)">aida12</div>
<div class="t" style="left:411.67px;top:411.00px;font:normal 11.6px 'Liberation Serif';color:#008000;transform:scaleX(1.2015)">52.50</div>
<div class="t" style="left:689.91px;top:411.00px;font:normal 11.6px 'Liberation Serif';color:#008000;transform:scaleX(1.2015)">24.31</div>
<div class="t" style="left:968.09px;top:411.00px;font:normal 11.6px 'Liberation Serif';color:#008000;transform:scaleX(1.2015)">41.31</div>
<div class="t" style="left:1226.81px;top:411.00px;font:normal 11.6px 'Liberation Serif';color:#ff0000;transform:scaleX(1.2015)">0x18430701</div>
</body></html>
